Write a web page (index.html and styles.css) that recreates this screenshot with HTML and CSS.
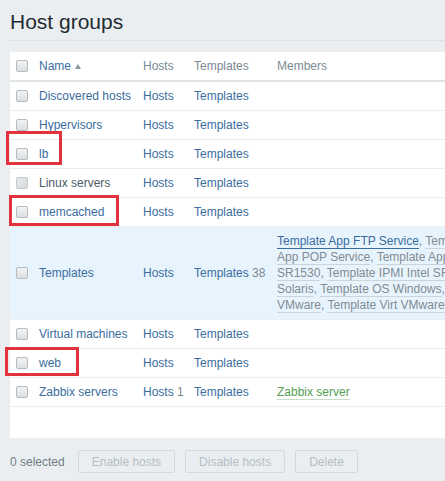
FILE: index.html
```html
<!DOCTYPE html>
<html lang="en">
<head>
<meta charset="utf-8">
<title>Host groups</title>
<link rel="stylesheet" href="styles.css">
</head>
<body>
<div class="page">
  <header class="page-header">
    <h1 class="title">Host groups</h1>
  </header>

  <div class="table-box">
    <table class="list">
      <colgroup>
        <col class="c-check">
        <col class="c-name">
        <col class="c-hosts">
        <col class="c-templates">
        <col class="c-members">
      </colgroup>
      <thead>
        <tr>
          <th><span class="cb"></span></th>
          <th><a class="sort">Name</a><span class="arrow-up"></span></th>
          <th>Hosts</th>
          <th>Templates</th>
          <th>Members</th>
        </tr>
      </thead>
      <tbody>
        <tr>
          <td><span class="cb"></span></td>
          <td><a class="link">Discovered hosts</a></td>
          <td><a class="link">Hosts</a></td>
          <td><a class="link">Templates</a></td>
          <td></td>
        </tr>
        <tr>
          <td><span class="cb"></span></td>
          <td><a class="link">Hypervisors</a></td>
          <td><a class="link">Hosts</a></td>
          <td><a class="link">Templates</a></td>
          <td></td>
        </tr>
        <tr>
          <td><span class="cb"></span></td>
          <td><a class="link">lb</a></td>
          <td><a class="link">Hosts</a></td>
          <td><a class="link">Templates</a></td>
          <td></td>
        </tr>
        <tr>
          <td><span class="cb cb-hover"></span></td>
          <td><a class="link link-hover">Linux servers</a></td>
          <td><a class="link">Hosts</a></td>
          <td><a class="link">Templates</a></td>
          <td></td>
        </tr>
        <tr>
          <td><span class="cb"></span></td>
          <td><a class="link">memcached</a></td>
          <td><a class="link">Hosts</a></td>
          <td><a class="link">Templates</a></td>
          <td></td>
        </tr>
        <tr class="row-hl">
          <td><span class="cb"></span></td>
          <td><a class="link">Templates</a></td>
          <td><a class="link">Hosts</a></td>
          <td><a class="link">Templates</a> <span class="count">38</span></td>
          <td class="members"><a class="tpl tpl-active">Template App FTP Service</a>, <a class="tpl">Template App HTTP Service</a>, <a class="tpl">Template App HTTPS Service</a>, <a class="tpl">Template App IMAP Service</a>, <a class="tpl">Template App LDAP Service</a>, <a class="tpl">Template App MySQL</a>, <a class="tpl">Template App NNTP Service</a>, <a class="tpl">Template App NTP Service</a>, <a class="tpl">Template App POP Service</a>, <a class="tpl">Template App SMTP Service</a>, <a class="tpl">Template App SSH Service</a>, <a class="tpl">Template App Telnet Service</a>, <a class="tpl">Template App Zabbix Agent</a>, <a class="tpl">Template App Zabbix Proxy</a>, <a class="tpl">Template App Zabbix Server</a>, <a class="tpl">Template ICMP Ping</a>, <a class="tpl">Template IPMI Intel SR1530</a>, <a class="tpl">Template IPMI Intel SR1630</a>, <a class="tpl">Template JMX Generic</a>, <a class="tpl">Template JMX Tomcat</a>, <a class="tpl">Template OS AIX</a>, <a class="tpl">Template OS FreeBSD</a>, <a class="tpl">Template OS HP-UX</a>, <a class="tpl">Template OS Linux</a>, <a class="tpl">Template OS Mac OS X</a>, <a class="tpl">Template OS OpenBSD</a>, <a class="tpl">Template OS Solaris</a>, <a class="tpl">Template OS Windows</a>, <a class="tpl">Template SNMP Device</a>, <a class="tpl">Template SNMP Disks</a>, <a class="tpl">Template SNMP Generic</a>, <a class="tpl">Template SNMP Interfaces</a>, <a class="tpl">Template SNMP OS Linux</a>, <a class="tpl">Template SNMP OS Windows</a>, <a class="tpl">Template SNMP Processors</a>, <a class="tpl">Template Virt VMware</a>, <a class="tpl">Template Virt VMware Guest</a>, <a class="tpl">Template Virt VMware Hypervisor</a></td>
        </tr>
        <tr>
          <td><span class="cb"></span></td>
          <td><a class="link">Virtual machines</a></td>
          <td><a class="link">Hosts</a></td>
          <td><a class="link">Templates</a></td>
          <td></td>
        </tr>
        <tr>
          <td><span class="cb"></span></td>
          <td><a class="link">web</a></td>
          <td><a class="link">Hosts</a></td>
          <td><a class="link">Templates</a></td>
          <td></td>
        </tr>
        <tr>
          <td><span class="cb"></span></td>
          <td><a class="link">Zabbix servers</a></td>
          <td><a class="link">Hosts</a> <span class="count">1</span></td>
          <td><a class="link">Templates</a></td>
          <td><a class="host">Zabbix server</a></td>
        </tr>
      </tbody>
    </table>
  </div>

  <div class="actions">
    <span class="selected">0 selected</span>
    <button class="btn" disabled>Enable hosts</button>
    <button class="btn" disabled>Disable hosts</button>
    <button class="btn" disabled>Delete</button>
  </div>

  <div class="mark mark-lb"></div>
  <div class="mark mark-memcached"></div>
  <div class="mark mark-web"></div>
</div>
</body>
</html>
```

FILE: styles.css
```css
* {
  box-sizing: border-box;
}

html, body {
  margin: 0;
  padding: 0;
  overflow: hidden;
  background: #ebeef0;
}

body {
  font-family: "Liberation Sans", Arial, sans-serif;
  font-size: 12px;
  color: #1f2c33;
}

.page {
  position: relative;
  padding-left: 10px;
  width: 1600px;
}

.page-header {
  padding-top: 10px;
  padding-bottom: 6px;
  border-bottom: 1px solid #dde2e5;
  margin-left: -2px;
  padding-left: 2px;
}

.title {
  margin: 0;
  font-size: 21px;
  line-height: 24px;
  font-weight: normal;
  color: #1f2c33;
}

.table-box {
  margin-top: 11px;
  background: #ffffff;
  padding-bottom: 31px;
  width: 1535px;
}

.list {
  border-collapse: collapse;
  table-layout: fixed;
  width: 1535px;
}

.c-check { width: 23px; }
.c-name { width: 104px; }
.c-hosts { width: 51px; }
.c-templates { width: 83px; }
.c-members { width: 1274px; }

.list th,
.list td {
  padding: 6px 6px;
  line-height: 16px;
  text-align: left;
  vertical-align: middle;
  white-space: nowrap;
  overflow: hidden;
}

.list th {
  font-weight: normal;
  color: #7a8a93;
  border-bottom: 2px solid #dfe4e7;
}

.list td {
  border-bottom: 1px solid #ebeef0;
}

.list th:first-child,
.list td:first-child {
  padding-right: 0;
}

.list td.members {
  white-space: normal;
  padding-top: 6px;
  padding-bottom: 6px;
}

.row-hl td {
  background: #e8f4fd;
}

.cb {
  display: block;
  width: 12px;
  height: 12px;
  border: 1px solid #b4bcc1;
  border-radius: 2px;
  background: linear-gradient(#f2f3f4, #dcdfe1);
}

.cb-hover {
  border-color: #c3cace;
  background: linear-gradient(135deg, #e6e9eb, #d6dadd);
}

.link,
.sort {
  color: #3a6d9d;
  text-decoration: none;
}

.link-hover {
  color: #4b5b65;
}

.arrow-up {
  display: inline-block;
  width: 0;
  height: 0;
  margin-left: 4px;
  vertical-align: 1px;
  border-left: 3.5px solid transparent;
  border-right: 3.5px solid transparent;
  border-bottom: 5px solid #8b979e;
}

.count {
  color: #7a8a93;
}

.members {
  color: #808b92;
}

.tpl {
  color: #808b92;
  text-decoration: none;
  border-bottom: 1px solid #ccd4d9;
}

.tpl-active {
  color: #3a6d9d;
  border-bottom-color: #3a6d9d;
}

.host {
  color: #52a052;
  text-decoration: none;
  border-bottom: 1px solid #c9dcc9;
}

.actions {
  display: flex;
  align-items: center;
  gap: 10px;
  margin-top: 12px;
}

.selected {
  color: #6f7e86;
  margin-right: 3px;
}

.btn {
  height: 23px;
  padding: 0 13px;
  font-family: "Liberation Sans", Arial, sans-serif;
  font-size: 12px;
  color: #b3bec4;
  background: #ebeef0;
  border: 1px solid #d4d9dc;
  border-radius: 2px;
}

.mark {
  position: absolute;
  border: 3px solid #e2333c;
}

.mark-lb {
  left: 6px;
  top: 131px;
  width: 56px;
  height: 34px;
}

.mark-memcached {
  left: 9px;
  top: 195px;
  width: 110px;
  height: 31px;
}

.mark-web {
  left: 5px;
  top: 347px;
  width: 74px;
  height: 29px;
}
```
